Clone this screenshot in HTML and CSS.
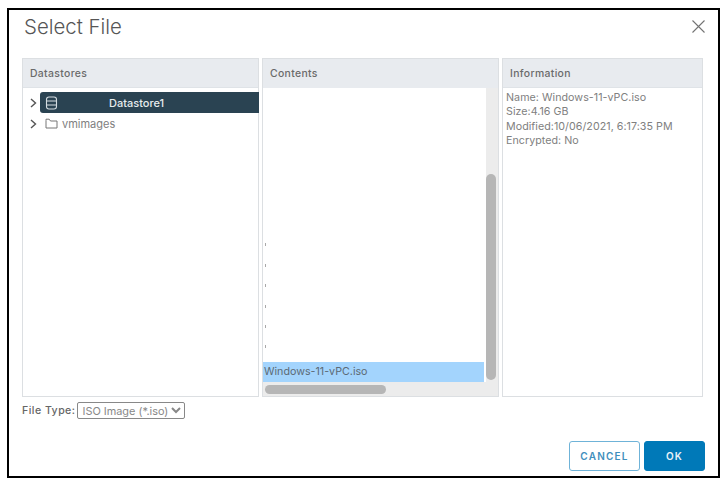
FILE: index.html
```html
<!DOCTYPE html>
<html lang="en">
<head>
<meta charset="utf-8">
<title>Select File</title>
<link rel="stylesheet" href="styles.css">
</head>
<body>
<div class="dialog">
  <header class="title-row">
    <h1 class="title">Select File</h1>
    <svg class="close" width="13" height="13" viewBox="0 0 13 13"><path d="M.5.5l12 12M12.5.5l-12 12" fill="none" stroke="#737373" stroke-width="1.1"/></svg>
  </header>
  <div class="panels">
    <section class="panel panel-stores">
      <div class="panel-head">Datastores</div>
      <div class="panel-body tree">
        <div class="tree-row">
          <svg class="caret" width="7" height="10" viewBox="0 0 7 10"><path d="M1 1l4.5 4L1 9" fill="none" stroke="#555" stroke-width="1.4"/></svg>
          <div class="node selected">
            <svg class="node-icon" width="13" height="14" viewBox="0 0 13 14"><g fill="none" stroke="#d5dde2" stroke-width="1.1"><rect x="1.5" y="1" width="10" height="12" rx="2.5"/><path d="M1.5 5h10M1.5 9h10"/></g></svg>
            <span class="node-label">Datastore1</span>
          </div>
        </div>
        <div class="tree-row">
          <svg class="caret" width="7" height="10" viewBox="0 0 7 10"><path d="M1 1l4.5 4L1 9" fill="none" stroke="#555" stroke-width="1.4"/></svg>
          <div class="node">
            <svg class="node-icon" width="13" height="11" viewBox="0 0 13 11"><path d="M1 2.5V10h11V3H5.5L4.2 1.2H1z" fill="none" stroke="#777" stroke-width="1"/></svg>
            <span class="plain-label">vmimages</span>
          </div>
        </div>
      </div>
    </section>
    <section class="panel panel-contents">
      <div class="panel-head">Contents</div>
      <div class="panel-body contents">
        <div class="list">
          <div class="list-space">
            <div class="speck-row"><i class="speck"></i></div>
            <div class="speck-row"><i class="speck"></i></div>
            <div class="speck-row"><i class="speck"></i></div>
            <div class="speck-row"><i class="speck"></i></div>
            <div class="speck-row"><i class="speck"></i></div>
            <div class="speck-row"><i class="speck"></i></div>
          </div>
          <div class="file-row">Windows-11-vPC.iso</div>
          <div class="v-track"><div class="v-thumb"></div></div>
        </div>
        <div class="h-track"><div class="h-thumb"></div></div>
      </div>
    </section>
    <section class="panel panel-info">
      <div class="panel-head">Information</div>
      <div class="panel-body info">
        <div>Name: Windows-11-vPC.iso</div>
        <div>Size:4.16 GB</div>
        <div>Modified:10/06/2021, 6:17:35 PM</div>
        <div>Encrypted: No</div>
      </div>
    </section>
  </div>
  <div class="type-row">
    <label class="type-label" for="ft">File Type:</label>
    <select class="type-select" id="ft"><option>ISO Image (*.iso)</option></select>
  </div>
  <footer class="actions">
    <button class="btn btn-outline">CANCEL</button>
    <button class="btn btn-solid">OK</button>
  </footer>
</div>
</body>
</html>
```

FILE: styles.css
```css
* { box-sizing: border-box; }
html, body { margin: 0; padding: 0; background: #fff; }
body { width: 723px; height: 483px; padding: 8px 3px 5px 7px; font-family: "Inter", "Liberation Sans", sans-serif; overflow: hidden; }
.dialog { width: 713px; height: 470px; border: 2px solid #000; background: #fff; display: flex; flex-direction: column; padding: 0 13px 5px 13px; }
.title-row { height: 48px; display: flex; align-items: center; justify-content: space-between; padding: 0 0 15px 2px; flex: none; }
.title { margin: 0; font-size: 20.4px; font-weight: 300; color: #565656; }
.panels { display: flex; gap: 3px; height: 339px; flex: none; }
.panel { display: flex; flex-direction: column; border: 1px solid #dcdfe2; background: #fff; min-width: 0; }
.panel-stores { width: 237px; }
.panel-contents { width: 237px; }
.panel-info { width: 201px; }
.panel-head { height: 29px; flex: none; background: #e8ebef; border-bottom: 1px solid #dfe3e7; display: flex; align-items: center; padding-left: 7px; font-size: 10.4px; font-weight: 500; color: #6a6a6a; letter-spacing: .35px; }
.panel-contents .panel-head { border-bottom: 0; }
.panel-body { flex: 1; min-height: 0; }
.tree { padding-top: 4px; }
.tree-row { display: flex; align-items: center; height: 21px; padding-left: 7px; }
.caret { flex: none; }
.node { flex: 1; height: 21px; margin-left: 3px; display: flex; align-items: center; padding-left: 5px; font-size: 11px; }
.selected { background: #2a4352; border-radius: 3px 0 0 3px; margin-right: -1px; }
.node-icon { flex: none; }
.node-label { margin-left: 51px; color: #e6ebee; font-weight: 500; }
.plain-label { margin-left: 4px; color: #808080; }
.contents { display: flex; flex-direction: column; background: #fff; }
.list { flex: 1; min-height: 0; display: grid; grid-template-columns: 1fr 12px; grid-template-rows: 1fr 20px; }
.list-space { grid-column: 1; grid-row: 1; display: flex; flex-direction: column; justify-content: flex-end; padding-bottom: 5px; }
.speck-row { height: 20.4px; flex: none; display: flex; align-items: center; padding-left: 2px; }
.speck { width: 1px; height: 3px; background: #a9a9a9; }
.file-row { grid-column: 1; grid-row: 2; background: #a3d4fd; margin-right: 2px; display: flex; align-items: center; padding: 0 0 1px 1px; font-size: 10.7px; color: #5c6a75; }
.v-track { grid-column: 2; grid-row: 1 / 3; background: #ececec; padding: 86px 2px 2px 0; }
.v-thumb { height: 100%; background: #b6b6b6; border-radius: 5px; }
.h-track { flex: none; height: 14px; background: #ececec; padding: 3px 0 2px 2px; }
.h-thumb { width: 121px; height: 9px; background: #b6b6b6; border-radius: 5px; }
.info { padding: 3px; font-size: 10.7px; line-height: 14.4px; color: #808080; letter-spacing: .04px; }
.type-row { display: flex; align-items: center; gap: 2px; height: 20px; margin-top: 3px; flex: none; }
.type-label { font-size: 10.6px; font-weight: 500; color: #666; letter-spacing: .45px; }
.type-select { width: 108px; height: 17px; padding: 0; font-family: inherit; font-size: 10.9px; color: #888; background: #fff; border: 1px solid #888; border-radius: 2px; }
.actions { margin-top: auto; display: flex; justify-content: flex-end; gap: 4px; }
.btn { height: 30px; border-radius: 3px; font-family: inherit; font-size: 10px; font-weight: 600; letter-spacing: 1.2px; }
.btn-outline { width: 71px; background: #fff; border: 1px solid #6fb3d8; color: #3f8fbd; }
.btn-solid { width: 61px; background: #0079b8; border: 1px solid #0079b8; color: #e8f2f8; }
```
